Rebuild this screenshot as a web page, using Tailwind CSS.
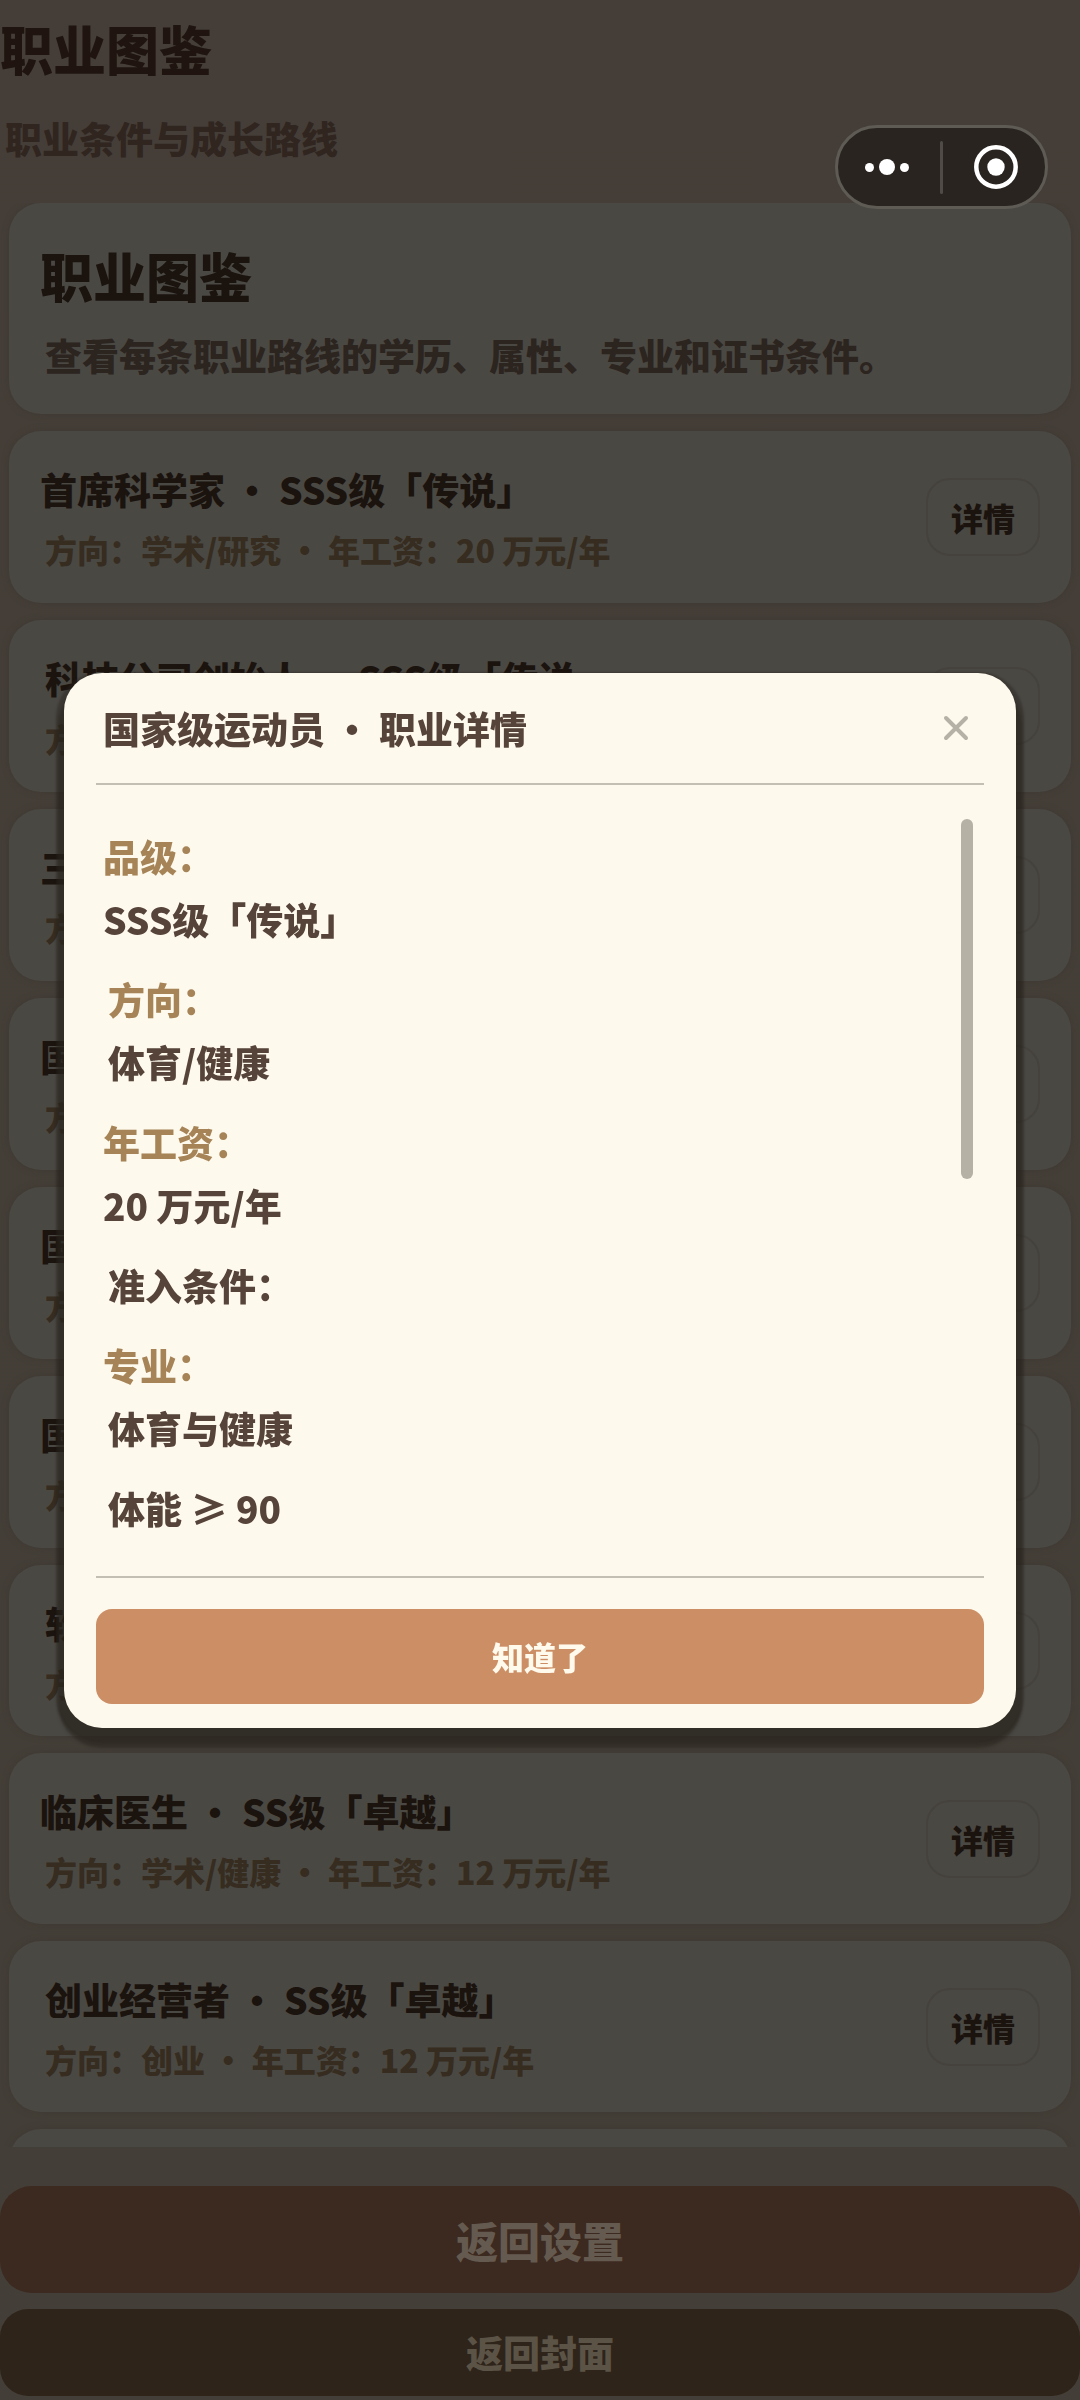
<!DOCTYPE html>
<html lang="zh-CN">
<head>
<meta charset="utf-8">
<meta name="viewport" content="width=device-width, initial-scale=1">
<title>职业图鉴</title>
<script src="https://cdn.jsdelivr.net/npm/@tailwindcss/browser@4"></script>
</head>
<body class="h-screen overflow-hidden bg-[#443e38] font-['Noto_Sans_CJK_SC','Noto_Sans',sans-serif] font-black text-[#1b130e]">

<div class="flex h-full flex-col bg-linear-to-b from-[#453e38] to-[#433e37]">
  <header class="h-[203px] shrink-0">
    <h1 class="pt-2 text-[53px] leading-[80px] text-[#1f140f]">职业图鉴</h1>
    <p class="pt-5 pl-[5px] text-[37px] leading-[60px] text-[#30251f]">职业条件与成长路线</p>
  </header>

  <main class="flex min-h-0 flex-1 flex-col gap-[17px] overflow-hidden px-[9px]">
    <section class="h-[211px] shrink-0 rounded-[32px] bg-[#4a4843] px-[31px] pt-8 shadow-[0_0_6px_#3f3933]">
      <h2 class="text-[53px] leading-[80px]">职业图鉴</h2>
      <p class="pl-[5px] text-[37px] leading-[80px] text-[#2c241f]">查看每条职业路线的学历、属性、专业和证书条件。</p>
    </section>

    <article class="flex h-[172px] shrink-0 items-center justify-between rounded-[32px] bg-[#4a4843] px-[31px] shadow-[0_0_6px_#3f3933]">
      <div class="pt-1">
        <h3 class="text-[37px] leading-[60px]">首席科学家 • SSS级「传说」</h3>
        <p class="pl-[5px] text-[32px] leading-[60px] text-[#362c1f]">方向：学术/研究 • 年工资：20 万元/年</p>
      </div>
      <button class="h-[78px] w-[114px] rounded-3xl border-2 border-[#45423d] text-[32px]">详情</button>
    </article>

    <article class="flex h-[172px] shrink-0 items-center justify-between rounded-[32px] bg-[#4a4843] px-[31px] shadow-[0_0_6px_#3f3933]">
      <div class="pt-1">
        <h3 class="pl-[5px] text-[37px] leading-[60px]">科技公司创始人 • SSS级「传说」</h3>
        <p class="pl-[5px] text-[32px] leading-[60px] text-[#362c1f]">方向：创业 • 年工资：20 万元/年</p>
      </div>
      <button class="h-[78px] w-[114px] rounded-3xl border-2 border-[#45423d] text-[32px]">详情</button>
    </article>

    <article class="flex h-[172px] shrink-0 items-center justify-between rounded-[32px] bg-[#4a4843] px-[31px] shadow-[0_0_6px_#3f3933]">
      <div class="pt-1">
        <h3 class="text-[37px] leading-[60px]">三甲医院院长</h3>
        <p class="pl-[5px] text-[32px] leading-[60px] text-[#362c1f]">方向：学术/健康</p>
      </div>
      <button class="h-[78px] w-[114px] rounded-3xl border-2 border-[#45423d] text-[32px]">详情</button>
    </article>

    <article class="flex h-[172px] shrink-0 items-center justify-between rounded-[32px] bg-[#4a4843] px-[31px] shadow-[0_0_6px_#3f3933]">
      <div class="pt-1">
        <h3 class="text-[37px] leading-[60px]">国家级运动员</h3>
        <p class="pl-[5px] text-[32px] leading-[60px] text-[#362c1f]">方向：体育/健康</p>
      </div>
      <button class="h-[78px] w-[114px] rounded-3xl border-2 border-[#45423d] text-[32px]">详情</button>
    </article>

    <article class="flex h-[172px] shrink-0 items-center justify-between rounded-[32px] bg-[#4a4843] px-[31px] shadow-[0_0_6px_#3f3933]">
      <div class="pt-1">
        <h3 class="text-[37px] leading-[60px]">国家级艺术家</h3>
        <p class="pl-[5px] text-[32px] leading-[60px] text-[#362c1f]">方向：艺术</p>
      </div>
      <button class="h-[78px] w-[114px] rounded-3xl border-2 border-[#45423d] text-[32px]">详情</button>
    </article>

    <article class="flex h-[172px] shrink-0 items-center justify-between rounded-[32px] bg-[#4a4843] px-[31px] shadow-[0_0_6px_#3f3933]">
      <div class="pt-1">
        <h3 class="text-[37px] leading-[60px]">国际律师</h3>
        <p class="pl-[5px] text-[32px] leading-[60px] text-[#362c1f]">方向：法律</p>
      </div>
      <button class="h-[78px] w-[114px] rounded-3xl border-2 border-[#45423d] text-[32px]">详情</button>
    </article>

    <article class="flex h-[171px] shrink-0 items-center justify-between rounded-[32px] bg-[#4a4843] px-[31px] shadow-[0_0_6px_#3f3933]">
      <div class="pt-1">
        <h3 class="pl-[5px] text-[37px] leading-[60px]">软件架构师</h3>
        <p class="pl-[5px] text-[32px] leading-[60px] text-[#362c1f]">方向：技术</p>
      </div>
      <button class="h-[78px] w-[114px] rounded-3xl border-2 border-[#45423d] text-[32px]">详情</button>
    </article>

    <article class="flex h-[171px] shrink-0 items-center justify-between rounded-[32px] bg-[#4a4843] px-[31px] shadow-[0_0_6px_#3f3933]">
      <div class="pt-1">
        <h3 class="text-[37px] leading-[60px]">临床医生 • SS级「卓越」</h3>
        <p class="pl-[5px] text-[32px] leading-[60px] text-[#362c1f]">方向：学术/健康 • 年工资：12 万元/年</p>
      </div>
      <button class="h-[78px] w-[114px] rounded-3xl border-2 border-[#45423d] text-[32px]">详情</button>
    </article>

    <article class="flex h-[171px] shrink-0 items-center justify-between rounded-[32px] bg-[#4a4843] px-[31px] shadow-[0_0_6px_#3f3933]">
      <div class="pt-1">
        <h3 class="pl-[5px] text-[37px] leading-[60px]">创业经营者 • SS级「卓越」</h3>
        <p class="pl-[5px] text-[32px] leading-[60px] text-[#362c1f]">方向：创业 • 年工资：12 万元/年</p>
      </div>
      <button class="h-[78px] w-[114px] rounded-3xl border-2 border-[#45423d] text-[32px]">详情</button>
    </article>

    <article class="h-[171px] shrink-0 rounded-[32px] bg-[#4a4843] shadow-[0_0_6px_#3f3933]"></article>
  </main>

  <footer class="flex shrink-0 flex-col gap-4 pt-[39px] pb-1">
    <button class="h-[107px] rounded-[32px] bg-[#3c291f] text-[42px] text-[#655a50]">返回设置</button>
    <button class="h-[87px] rounded-[28px] bg-[#2e241a] text-[37px] text-[#5c5347]">返回封面</button>
  </footer>
</div>

<!-- 职业详情弹窗 -->
<div class="fixed inset-0 flex items-center justify-center px-16">
  <section role="dialog" aria-modal="true" aria-labelledby="dialog-title" class="w-full rounded-[38px] bg-[#fdf9ec] px-8 pb-6 text-[37px] text-[#56433a] shadow-[0_7px_2px_8px_rgba(40,36,30,0.4),0_14px_3px_6px_rgba(40,36,30,0.55)]">
    <header class="flex h-28 items-center justify-between border-b-2 border-[#c3bfb2] pr-[14px] pl-[7px]">
      <h2 id="dialog-title" class="leading-[60px]">国家级运动员 • 职业详情</h2>
      <button aria-label="关闭" class="size-7">
        <svg viewBox="0 0 28 28" class="size-7" fill="none" stroke="#b5b1a7" stroke-width="4" stroke-linecap="round"><path d="M4 4 24 24M24 4 4 24"/></svg>
      </button>
    </header>
    <div class="flex items-start justify-between border-b-2 border-[#c3bfb2] pr-[11px] pl-[7px]">
      <dl class="flex flex-col gap-[17px] pt-10 pb-9 leading-[63px]">
        <div><dt class="text-[#a68457]">品级：</dt><dd>SSS级「传说」</dd></div>
        <div class="pl-[5px]"><dt class="text-[#a68457]">方向：</dt><dd>体育/健康</dd></div>
        <div><dt class="text-[#a68457]">年工资：</dt><dd>20 万元/年</dd></div>
        <div class="pl-[5px]"><dt>准入条件：</dt></div>
        <div><dt class="text-[#a68457]">专业：</dt><dd class="pl-[5px]">体育与健康</dd></div>
        <div class="pl-[5px]"><dd>体能 ≥ 90</dd></div>
      </dl>
      <div class="mt-[34px] h-[360px] w-3 rounded-full bg-[#b5b1a5]"></div>
    </div>
    <button class="mt-[31px] h-[95px] w-full rounded-2xl bg-[#cc8e65] text-[32px] text-[#fffaec]">知道了</button>
  </section>
</div>

<!-- 小程序胶囊按钮 -->
<nav class="fixed top-[125px] right-8 flex h-[84px] w-[213px] items-center rounded-full border-3 border-[#5e5b55] bg-[#292420]">
  <button aria-label="更多" class="flex h-full flex-1 items-center justify-center gap-[5px] pr-1">
    <span class="size-[9px] rounded-full bg-white"></span>
    <span class="size-4 rounded-full bg-white"></span>
    <span class="size-[9px] rounded-full bg-white"></span>
  </button>
  <span class="h-[53px] w-[3px] rounded-full bg-[#4f4c47]"></span>
  <button aria-label="关闭小程序" class="flex h-full flex-1 items-center justify-center pl-1">
    <svg viewBox="0 0 44 44" class="size-11"><circle cx="22" cy="22" r="19.7" fill="none" stroke="#fff" stroke-width="4.5"/><circle cx="22" cy="22" r="8.7" fill="#fff"/></svg>
  </button>
</nav>
</body>
</html>
